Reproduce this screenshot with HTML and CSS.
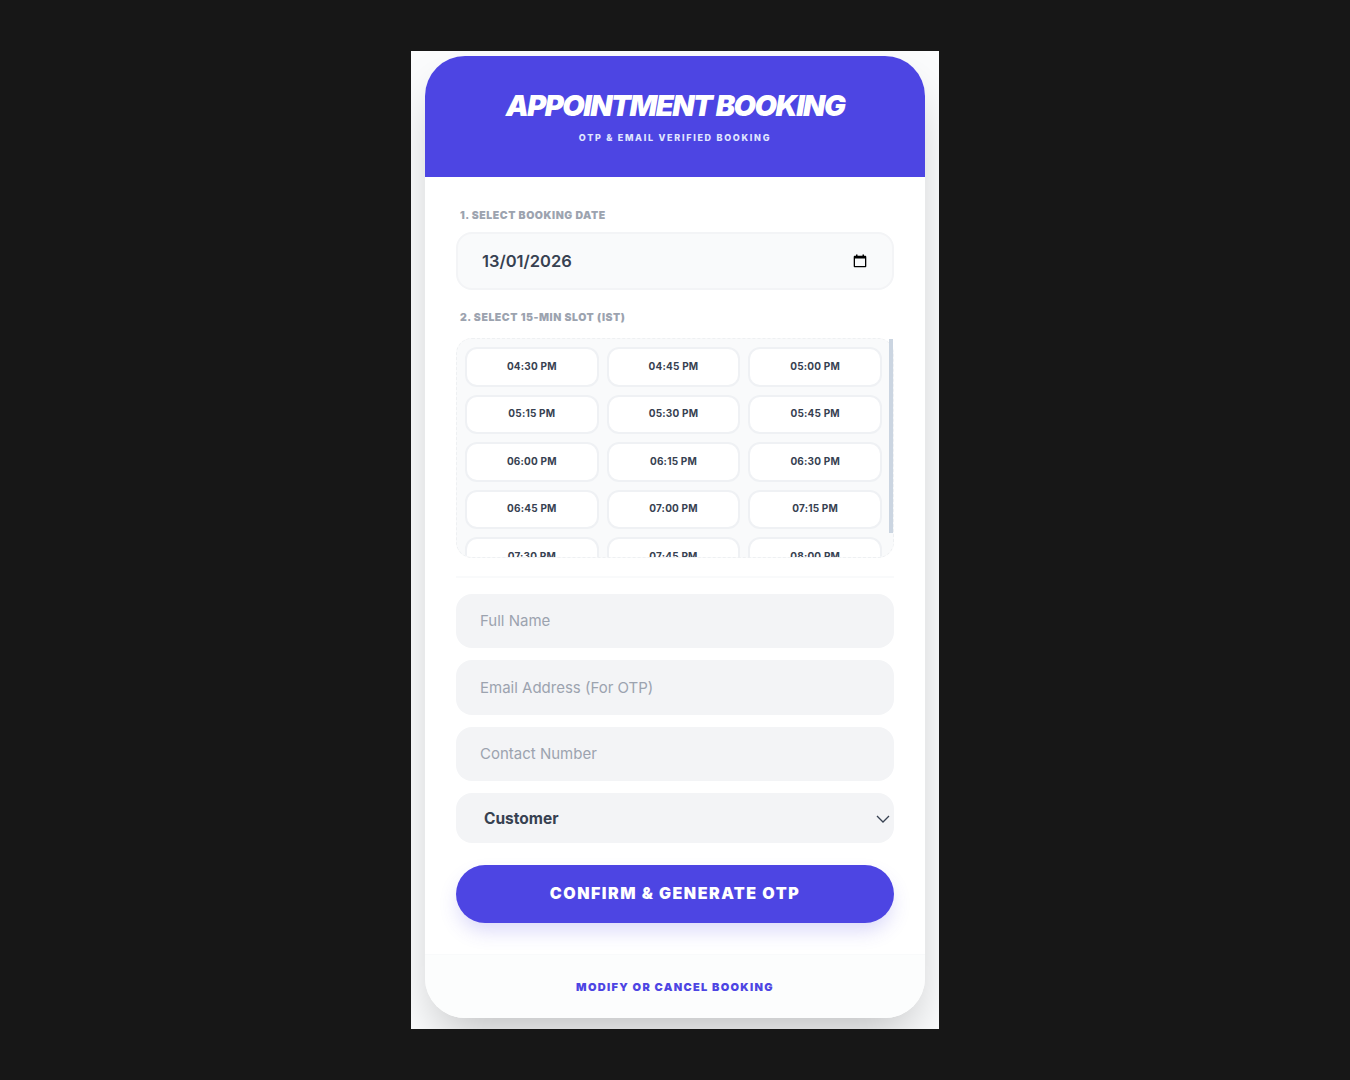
FILE: index.html
```html
<!DOCTYPE html>
<html lang="en">
<head>
  <meta charset="UTF-8">
  <meta name="viewport" content="width=device-width, initial-scale=1.0">
  <title>Appointment Booking</title>
  <link rel="stylesheet" href="styles.css">
</head>
<body>
  <div class="frame">
    <div class="card">
      <header class="card-header">
        <h1>Appointment Booking</h1>
        <p>OTP &amp; Email Verified Booking</p>
      </header>

      <main class="card-body">
        <label class="step-label">1. Select Booking Date</label>
        <div class="date-field">
          <span>13/01/2026</span>
          <svg class="date-icon" viewBox="0 0 14 14" width="14" height="14" aria-hidden="true">
            <path d="M3 0.5h1.5v1.3h5V0.5H11v1.3h1.2c.6 0 1.1.5 1.1 1.1v9.3c0 .6-.5 1.1-1.1 1.1H1.8c-.6 0-1.1-.5-1.1-1.1V2.9c0-.6.5-1.1 1.1-1.1H3z M2 4.6v7.4h10V4.6z" fill="#000" fill-rule="evenodd"/>
          </svg>
        </div>

        <label class="step-label step-label-slot">2. Select 15-Min Slot (IST)</label>
        <div class="slots-wrap">
          <div class="slots">
            <button class="slot">04:30 PM</button>
            <button class="slot">04:45 PM</button>
            <button class="slot">05:00 PM</button>
            <button class="slot">05:15 PM</button>
            <button class="slot">05:30 PM</button>
            <button class="slot">05:45 PM</button>
            <button class="slot">06:00 PM</button>
            <button class="slot">06:15 PM</button>
            <button class="slot">06:30 PM</button>
            <button class="slot">06:45 PM</button>
            <button class="slot">07:00 PM</button>
            <button class="slot">07:15 PM</button>
            <button class="slot">07:30 PM</button>
            <button class="slot">07:45 PM</button>
            <button class="slot">08:00 PM</button>
          </div>
          <div class="slots-thumb"></div>
        </div>

        <div class="details">
          <input class="text-input" type="text" placeholder="Full Name">
          <input class="text-input" type="email" placeholder="Email Address (For OTP)">
          <input class="text-input" type="tel" placeholder="Contact Number">
          <div class="select-field">
            <span>Customer</span>
            <svg viewBox="0 0 14 8" width="14" height="8" aria-hidden="true">
              <path d="M1 1l6 6 6-6" fill="none" stroke="#374151" stroke-width="1.3"/>
            </svg>
          </div>
        </div>

        <button class="confirm-btn">Confirm &amp; Generate OTP</button>
      </main>

      <footer class="card-footer">
        <a href="#">Modify or Cancel Booking</a>
      </footer>
    </div>
  </div>
</body>
</html>
```

FILE: styles.css
```css
* {
  box-sizing: border-box;
}

body {
  margin: 0;
  height: 1080px;
  display: flex;
  justify-content: center;
  align-items: center;
  background-color: #171717;
  font-family: Inter, "Liberation Sans", sans-serif;
  overflow: hidden;
}

.frame {
  width: 528px;
  height: 978px;
  padding: 5px 14px 11px;
  background-color: #fbfcfd;
  overflow: hidden;
}

.card {
  height: 962px;
  display: flex;
  flex-direction: column;
  background-color: #fff;
  border-radius: 40px;
  overflow: hidden;
  box-shadow: 0 25px 50px -12px rgba(0, 0, 0, 0.25);
}

.card-header {
  height: 121px;
  padding-top: 33px;
  text-align: center;
  color: #fff;
  background-color: #4d45e3;
}

.card-header h1 {
  margin: 0;
  font-size: 29px;
  line-height: 34px;
  font-weight: 900;
  font-style: italic;
  letter-spacing: -1.5px;
  text-transform: uppercase;
}

.card-header p {
  margin: 8px 0 0;
  font-size: 9px;
  line-height: 14px;
  font-weight: 800;
  letter-spacing: 1.7px;
  text-transform: uppercase;
  color: #e0e7ff;
}

.card-body {
  flex: 1;
  padding: 32px 31px 0;
}

.step-label {
  display: block;
  margin-left: 4px;
  font-size: 10.5px;
  line-height: 14px;
  font-weight: 900;
  letter-spacing: 0.55px;
  text-transform: uppercase;
  color: #9ca3af;
}

.step-label-slot {
  margin-top: 21px;
}

.date-field {
  height: 58px;
  margin-top: 9px;
  padding: 0 25px 0 24px;
  display: flex;
  justify-content: space-between;
  align-items: center;
  background-color: #f9fafb;
  border: 2px solid #f3f4f6;
  border-radius: 16px;
  font-size: 16.5px;
  font-weight: 600;
  color: #374151;
}

.slots-wrap {
  position: relative;
  margin-top: 13px;
}

.slots {
  height: 220px;
  padding: 8px 11px 8px 8px;
  display: grid;
  grid-template-columns: repeat(3, 1fr);
  grid-auto-rows: 39.5px;
  gap: 8px;
  overflow-y: scroll;
  background-color: #f9fafb;
  border: 1px dashed #eef0f2;
  border-radius: 16px;
}

.slots-thumb {
  position: absolute;
  top: 1px;
  right: 1px;
  width: 4px;
  height: 194px;
  background-color: #cbd5e1;
}

.slot {
  padding: 0 0 2px;
  font-family: inherit;
  font-size: 10px;
  font-weight: 700;
  letter-spacing: 0.2px;
  color: #374151;
  background-color: #fff;
  border: 2px solid #eff1f4;
  border-radius: 12px;
}

.details {
  margin-top: 18px;
  padding-top: 15.5px;
  display: flex;
  flex-direction: column;
  gap: 12px;
  border-top: 2px solid #f9fafb;
}

.text-input {
  height: 54.5px;
  padding: 0 24px;
  font-family: inherit;
  font-size: 15px;
  background-color: #f3f4f6;
  border: none;
  border-radius: 16px;
}

.text-input::placeholder {
  color: #9ca3af;
  opacity: 1;
}

.select-field {
  height: 50px;
  padding: 1px 4px 0 28px;
  display: flex;
  justify-content: space-between;
  align-items: center;
  background-color: #f3f4f6;
  border-radius: 16px;
  font-size: 15.5px;
  font-weight: 700;
  color: #374151;
}

.confirm-btn {
  width: 100%;
  height: 58px;
  margin-top: 21.5px;
  padding: 0 0 2px;
  font-family: inherit;
  font-size: 16px;
  font-weight: 900;
  letter-spacing: 1.5px;
  text-transform: uppercase;
  color: #fff;
  background-color: #4d45e3;
  border: none;
  border-radius: 29px;
  box-shadow: 0 10px 20px -3px rgba(79, 70, 229, 0.22);
}

.card-footer {
  height: 64px;
  padding-top: 20px;
  text-align: center;
  background-color: #fcfdfd;
  border-top: 1px solid #f9fafb;
}

.card-footer a {
  font-size: 11px;
  line-height: 14px;
  font-weight: 900;
  letter-spacing: 1.3px;
  text-transform: uppercase;
  text-decoration: none;
  color: #4d45e3;
}
```
